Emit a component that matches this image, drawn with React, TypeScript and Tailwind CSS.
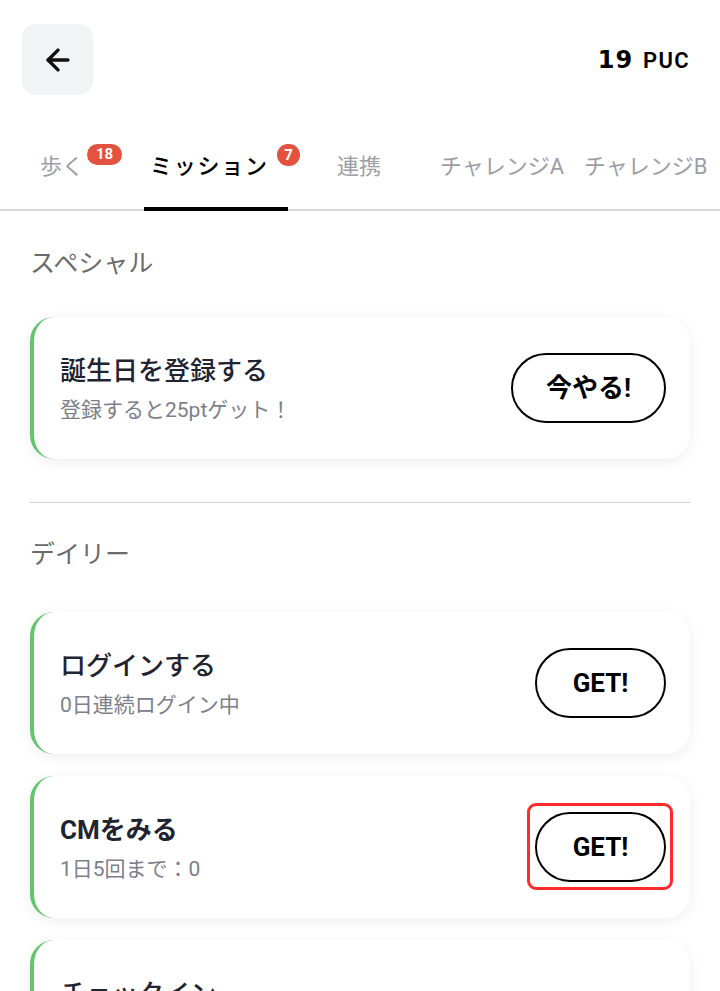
import { ArrowLeft } from "lucide-react";

const font = { fontFamily: "Roboto, 'Noto Sans CJK JP', sans-serif" };

type Tab = { label: string; badge?: string; active?: boolean; pad: string };

const tabs: Tab[] = [
  { label: "歩く", badge: "18", pad: "pl-[40px]" },
  { label: "ミッション", badge: "7", active: true, pad: "pl-[6px]" },
  { label: "連携", pad: "pl-[49px]" },
  { label: "チャレンジA", pad: "pl-[8px]" },
  { label: "チャレンジB", pad: "pl-[8px]" },
];

function MissionCard({
  title,
  sub,
  action,
  bold,
  highlight,
}: {
  title: string;
  sub: string;
  action?: string;
  bold?: boolean;
  highlight?: boolean;
}) {
  return (
    <div className="flex justify-between h-[142px] rounded-[24px] bg-white border-l-[4px] border-[#62c46c] shadow-[0_3px_14px_rgba(0,0,0,0.07)] pl-[26px] pr-[24px]">
      <div className="flex flex-col pt-[38px] gap-[9px]">
        <div className={`text-[26px] leading-[32px] text-[#1f2430] ${bold ? "font-bold" : "font-medium"}`}>
          {title}
        </div>
        <div className="text-[21px] leading-[28px] text-[#7b808a]">{sub || "\u00a0"}</div>
      </div>
      {action && (
        <div className="relative self-center">
          <button
            className={`h-[70px] rounded-full border-2 border-black bg-white text-[26px] font-bold text-black ${
              action === "GET!" ? "w-[131px]" : "w-[155px]"
            }`}
          >
            {action}
          </button>
          {highlight && (
            <div className="absolute -left-[8px] -right-[7px] -top-[9px] -bottom-[8px] rounded-[9px] border-[3px] border-[#ff2a2a]" />
          )}
        </div>
      )}
    </div>
  );
}

export default function App() {
  return (
    <div className="w-[720px] h-[991px] overflow-hidden bg-white" style={font}>
      {/* Header */}
      <div className="flex items-center justify-between pt-[24px] pl-[22px] pr-[30px]">
        <button className="w-[71px] h-[71px] rounded-[14px] bg-[#f2f3f5] flex items-center justify-center">
          <ArrowLeft size={34} strokeWidth={2.4} color="#111" />
        </button>
        <div className="flex items-baseline gap-[10px] text-[22px] font-semibold text-black tracking-[0.06em]">
          <span
            className="text-[24px] font-bold tracking-[0.04em]"
            style={{ fontFamily: "'DejaVu Sans', sans-serif" }}
          >
            19
          </span>
          <span>PUC</span>
        </div>
      </div>

      {/* Tabs */}
      <div className="mt-[52px] flex border-b-2 border-[#d6d8dc] whitespace-nowrap">
        {tabs.map((t) => (
          <div key={t.label} className={`relative shrink-0 w-[144px] h-[62px] ${t.pad}`}>
            <div className="relative inline-block pt-[5px]">
              <span
                className={`text-[22px] leading-[30px] ${
                  t.active ? "text-black font-medium tracking-[0.08em]" : "text-[#9a9ea6]"
                }`}
              >
                {t.label}
              </span>
              {t.badge === "18" && (
                <span className="absolute top-[-3px] left-[47px] h-[21px] w-[35px] rounded-full bg-[#e2523e] text-white text-[15px] font-bold leading-[21px] text-center">
                  18
                </span>
              )}
              {t.badge === "7" && (
                <span className="absolute top-[-3px] left-[127px] h-[22px] w-[23px] rounded-full bg-[#e2523e] text-white text-[15px] font-bold leading-[22px] text-center">
                  7
                </span>
              )}
            </div>
            {t.active && <div className="absolute left-0 right-0 -bottom-[2px] h-[4px] bg-black" />}
          </div>
        ))}
      </div>

      {/* Content */}
      <div className="px-[30px]">
        <div className="mt-[37px] text-[25px] leading-[32px] text-[#6b6b6b]">スペシャル</div>
        <div className="mt-[37px]">
          <MissionCard title="誕生日を登録する" sub="登録すると25ptゲット！" action="今やる!" />
        </div>

        <div className="mt-[43px] h-px bg-[#cfd1d4]" />

        <div className="mt-[36px] text-[25px] leading-[32px] text-[#6b6b6b]">デイリー</div>
        <div className="mt-[41px] flex flex-col gap-[22px]">
          <MissionCard title="ログインする" sub="0日連続ログイン中" action="GET!" />
          <MissionCard title="CMをみる" sub="1日5回まで：0" action="GET!" bold highlight />
          <MissionCard title="チェックイン" sub="" />
        </div>
      </div>
    </div>
  );
}
